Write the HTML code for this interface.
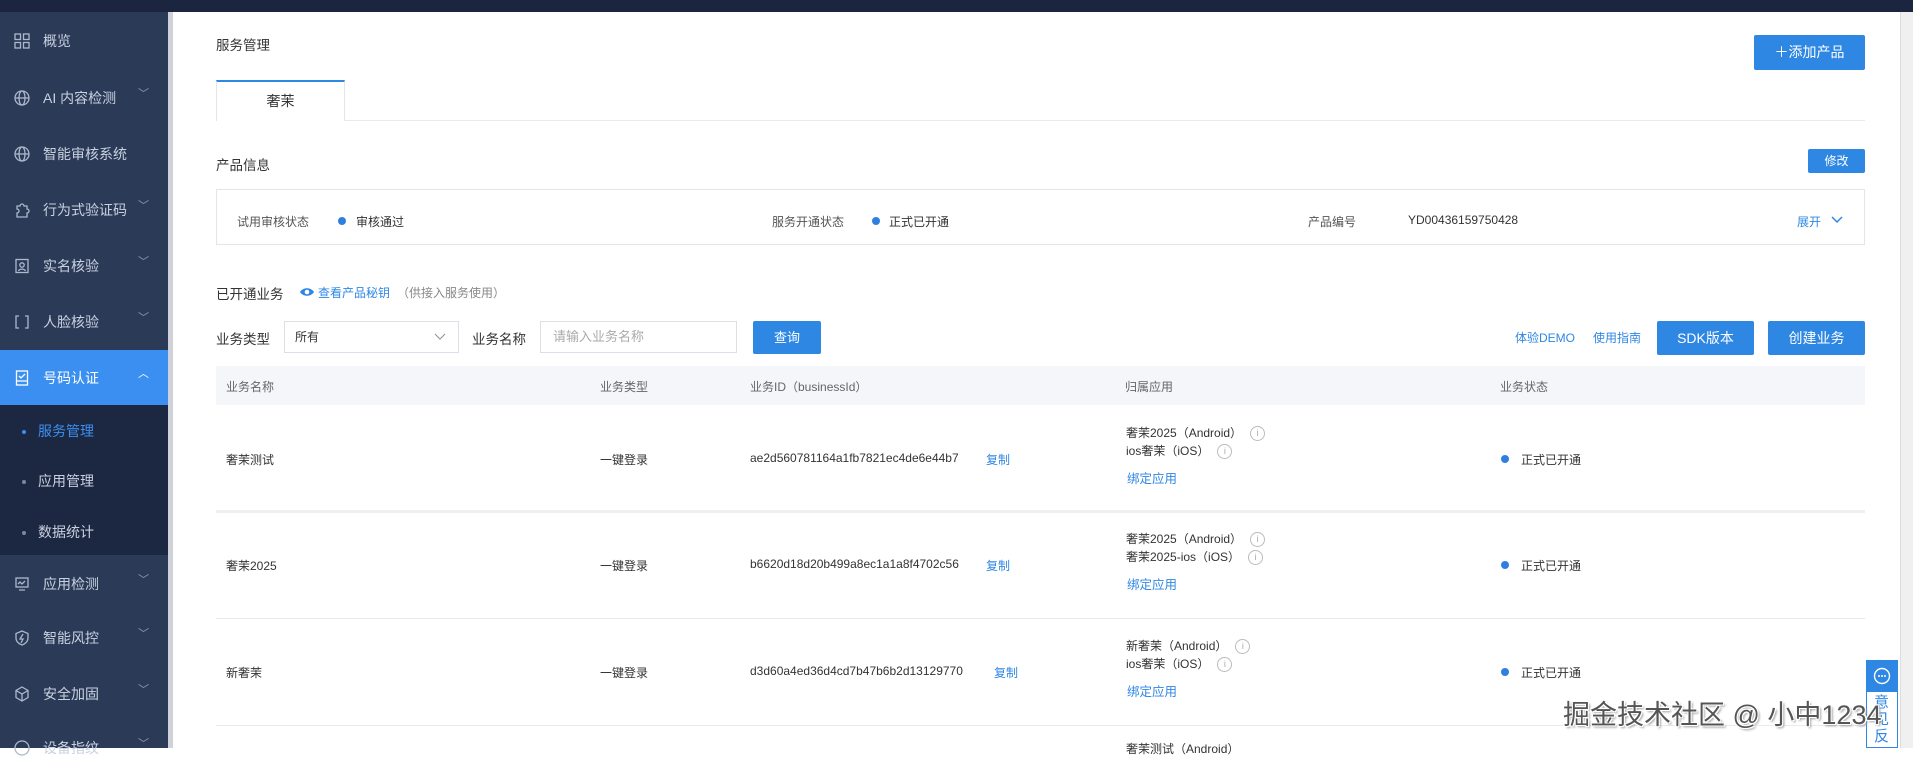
<!DOCTYPE html>
<html><head><meta charset="utf-8"><style>
*{margin:0;padding:0;box-sizing:border-box}
body{width:1913px;height:748px;overflow:hidden;background:#fff;font-family:"Liberation Sans","Noto Sans CJK SC",sans-serif;font-size:13px;color:#333;position:relative}
.a{position:absolute;white-space:nowrap}
.top{left:0;top:0;width:1913px;height:12px;background:#1b2540}
.side{left:0;top:12px;width:168px;height:736px;background:#2b3a57}
.strip{left:168px;top:12px;width:5px;height:736px;background:#cfd2d8}
.mi{left:0;width:168px;height:56px;color:#c9d1e0;font-size:14px;line-height:56px}
.mi .ic{position:absolute;left:14px;top:20px;width:16px;height:16px}
.mi .t{position:absolute;left:43px}
.mi .ar{position:absolute;left:138px;top:-4px;font-size:11px;color:#8f9bb3}
.sub{left:0;top:405px;width:168px;height:150px;background:#1c2741}
.si{left:22px;font-size:14px;color:#c9d1e0}
.si b{display:inline-block;width:4px;height:4px;border-radius:2px;background:#7b879e;margin-right:12px;vertical-align:middle}
.btn{background:#2f87e4;color:#fff;text-align:center;border-radius:2px}
.blue{color:#2f87e4}
.dot{display:inline-block;width:8px;height:8px;border-radius:4px;background:#2f7fe0}
.info{display:inline-block;width:15px;height:15px;border:1px solid #bbb;border-radius:8px;font-size:9px;line-height:13px;text-align:center;color:#aaa;margin-left:8px;vertical-align:middle}
.hl{left:216px;width:1649px;height:1px;background:#e8eaee}
</style></head><body>
<div class="a top"></div>
<div class="a side"></div>
<div class="a strip"></div>

<div class="a mi" style="top:13px"><svg class="ic" viewBox="0 0 16 16" fill="none" stroke="#aeb8cc" stroke-width="1.3"><rect x="1" y="1" width="5.5" height="5.5"/><rect x="9.5" y="1" width="5.5" height="5.5"/><rect x="1" y="9.5" width="5.5" height="5.5"/><rect x="9.5" y="9.5" width="5.5" height="5.5"/></svg><span class="t">概览</span></div>
<div class="a mi" style="top:70px"><svg class="ic" viewBox="0 0 16 16" fill="none" stroke="#aeb8cc" stroke-width="1.3"><circle cx="8" cy="8" r="7"/><ellipse cx="8" cy="8" rx="3" ry="7"/><path d="M1 8h14"/></svg><span class="t">AI 内容检测</span><span class="ar">﹀</span></div>
<div class="a mi" style="top:126px"><svg class="ic" viewBox="0 0 16 16" fill="none" stroke="#aeb8cc" stroke-width="1.3"><circle cx="8" cy="8" r="7"/><ellipse cx="8" cy="8" rx="3" ry="7"/><path d="M1 8h14"/></svg><span class="t">智能审核系统</span></div>
<div class="a mi" style="top:182px"><svg class="ic" viewBox="0 0 16 16" fill="none" stroke="#aeb8cc" stroke-width="1.3"><path d="M3 4h3a2 2 0 1 1 4 0h3v3a2 2 0 1 1 0 4v4H3v-4a2 2 0 1 0 0-4z"/></svg><span class="t">行为式验证码</span><span class="ar">﹀</span></div>
<div class="a mi" style="top:238px"><svg class="ic" viewBox="0 0 16 16" fill="none" stroke="#aeb8cc" stroke-width="1.3"><rect x="2" y="1.5" width="12" height="13"/><circle cx="8" cy="7" r="2.2"/><path d="M4.5 13c1-2.5 6-2.5 7 0"/></svg><span class="t">实名核验</span><span class="ar">﹀</span></div>
<div class="a mi" style="top:294px"><svg class="ic" viewBox="0 0 16 16" fill="none" stroke="#aeb8cc" stroke-width="1.3"><path d="M5 2H2v12h3M11 2h3v12h-3"/></svg><span class="t">人脸核验</span><span class="ar">﹀</span></div>
<div class="a mi" style="top:350px;height:55px;background:#3b8ff0;color:#fff"><svg class="ic" viewBox="0 0 16 16" fill="none" stroke="#fff" stroke-width="1.3"><rect x="2.5" y="1" width="11" height="14"/><path d="M5 6l2 2 4-4M2.5 11h11"/></svg><span class="t">号码认证</span><span class="ar" style="color:#fff">︿</span></div>
<div class="a sub"></div>
<div class="a si" style="top:421px;color:#3b8ff0"><b style="background:#3b8ff0"></b>服务管理</div>
<div class="a si" style="top:471px"><b></b>应用管理</div>
<div class="a si" style="top:522px"><b></b>数据统计</div>
<div class="a mi" style="top:556px"><svg class="ic" viewBox="0 0 16 16" fill="none" stroke="#aeb8cc" stroke-width="1.3"><rect x="2" y="2" width="12" height="9"/><path d="M4 8l2-2 2 2 3-3M5 14h6"/></svg><span class="t">应用检测</span><span class="ar">﹀</span></div>
<div class="a mi" style="top:610px"><svg class="ic" viewBox="0 0 16 16" fill="none" stroke="#aeb8cc" stroke-width="1.3"><path d="M8 1l6 2.5V8c0 3.5-3 6-6 7-3-1-6-3.5-6-7V3.5z"/><path d="M9 4L6 9h3l-2 4"/></svg><span class="t">智能风控</span><span class="ar">﹀</span></div>
<div class="a mi" style="top:666px"><svg class="ic" viewBox="0 0 16 16" fill="none" stroke="#aeb8cc" stroke-width="1.3"><path d="M8 1l6 3.5v7L8 15l-6-3.5v-7z"/><path d="M2 4.5l6 3.5 6-3.5M8 8v7"/></svg><span class="t">安全加固</span><span class="ar">﹀</span></div>
<div class="a mi" style="top:720px"><svg class="ic" viewBox="0 0 16 16" fill="none" stroke="#aeb8cc" stroke-width="1.3"><circle cx="8" cy="8" r="7"/></svg><span class="t">设备指纹</span><span class="ar">﹀</span></div>

<div class="a" style="left:1900px;top:12px;width:13px;height:736px;background:#f0f0f0;border-left:1px solid #ddd"></div>

<div class="a" style="left:216px;top:34px;font-size:13.5px;color:#333">服务管理</div>
<div class="a btn" style="left:1754px;top:35px;width:111px;height:35px;line-height:35px;font-size:14px">＋添加产品</div>

<div class="a" style="left:216px;top:80px;width:129px;height:41px;border:1px solid #e3e5ea;border-top:2px solid #2f87e4;border-bottom:none;background:#fff;text-align:center;line-height:38px;font-size:14px;z-index:2">奢茉</div>
<div class="a hl" style="top:120px"></div>

<div class="a" style="left:216px;top:154px;font-size:13.5px">产品信息</div>
<div class="a btn" style="left:1808px;top:149px;width:57px;height:24px;line-height:24px;font-size:12px">修改</div>

<div class="a" style="left:216px;top:189px;width:1649px;height:56px;border:1px solid #e3e5ea"></div>
<div class="a" style="left:237px;top:213px;font-size:12px;color:#555">试用审核状态</div>
<div class="a" style="left:338px;top:213px"><span class="dot"></span></div>
<div class="a" style="left:356px;top:213px;font-size:12px">审核通过</div>
<div class="a" style="left:772px;top:213px;font-size:12px;color:#555">服务开通状态</div>
<div class="a" style="left:872px;top:213px"><span class="dot"></span></div>
<div class="a" style="left:889px;top:213px;font-size:12px">正式已开通</div>
<div class="a" style="left:1308px;top:213px;font-size:12px;color:#555">产品编号</div>
<div class="a" style="left:1408px;top:213px;font-size:12px">YD00436159750428</div>
<div class="a blue" style="left:1797px;top:213px;font-size:12px">展开</div>
<svg class="a" style="left:1830px;top:215px" width="14" height="10" viewBox="0 0 14 10"><path d="M2 2l5 5 5-5" fill="none" stroke="#2f87e4" stroke-width="1.5"/></svg>

<div class="a" style="left:216px;top:283px;font-size:13.5px">已开通业务</div>
<svg class="a" style="left:299px;top:285px" width="16" height="14" viewBox="0 0 16 14"><path d="M1 7c3-5 11-5 14 0-3 5-11 5-14 0z" fill="#2f87e4"/><circle cx="8" cy="7" r="2.3" fill="#fff"/></svg>
<div class="a blue" style="left:318px;top:284px;font-size:12px">查看产品秘钥</div>
<div class="a" style="left:397px;top:284px;font-size:12px;color:#888">（供接入服务使用）</div>

<div class="a" style="left:216px;top:328px;font-size:13.5px">业务类型</div>
<div class="a" style="left:284px;top:321px;width:175px;height:32px;border:1px solid #dcdfe6;padding-left:10px;line-height:30px;font-size:12px">所有</div>
<svg class="a" style="left:434px;top:332px" width="12" height="10" viewBox="0 0 12 10"><path d="M1 2l5 5 5-5" fill="none" stroke="#999" stroke-width="1.2"/></svg>
<div class="a" style="left:472px;top:328px;font-size:13.5px">业务名称</div>
<div class="a" style="left:540px;top:321px;width:197px;height:32px;border:1px solid #dcdfe6;padding-left:12px;line-height:30px;font-size:13px;color:#aaa">请输入业务名称</div>
<div class="a btn" style="left:753px;top:321px;width:68px;height:33px;line-height:33px;font-size:13px">查询</div>
<div class="a blue" style="left:1515px;top:329px;font-size:12px">体验DEMO</div>
<div class="a blue" style="left:1593px;top:329px;font-size:12px">使用指南</div>
<div class="a btn" style="left:1657px;top:321px;width:97px;height:34px;line-height:34px;font-size:14px">SDK版本</div>
<div class="a btn" style="left:1768px;top:321px;width:97px;height:34px;line-height:34px;font-size:14px">创建业务</div>

<div class="a" style="left:216px;top:366px;width:1649px;height:39px;background:#f4f6fa"></div>
<div class="a" style="left:226px;top:378px;font-size:12px;color:#666">业务名称</div>
<div class="a" style="left:600px;top:378px;font-size:12px;color:#666">业务类型</div>
<div class="a" style="left:750px;top:378px;font-size:12px;color:#666">业务ID（businessId）</div>
<div class="a" style="left:1125px;top:378px;font-size:12px;color:#666">归属应用</div>
<div class="a" style="left:1500px;top:378px;font-size:12px;color:#666">业务状态</div>

<div class="a" style="left:216px;top:510px;width:1649px;height:3px;background:#eef0f3"></div>
<div class="a hl" style="top:618px"></div>
<div class="a hl" style="top:725px"></div>

<div class="a" style="left:226px;top:451px;font-size:12px">奢茉测试</div>
<div class="a" style="left:600px;top:451px;font-size:12px">一键登录</div>
<div class="a" style="left:750px;top:451px;font-size:12px">ae2d560781164a1fb7821ec4de6e44b7</div>
<div class="a blue" style="left:986px;top:451px;font-size:12px">复制</div>
<div class="a" style="left:1126px;top:424px;font-size:12px">奢茉2025（Android）<span class="info">i</span></div>
<div class="a" style="left:1126px;top:442px;font-size:12px">ios奢茉（iOS）<span class="info">i</span></div>
<div class="a blue" style="left:1127px;top:468px;font-size:12.5px">绑定应用</div>
<div class="a" style="left:1501px;top:451px"><span class="dot"></span></div>
<div class="a" style="left:1521px;top:451px;font-size:12px">正式已开通</div>

<div class="a" style="left:226px;top:557px;font-size:12px">奢茉2025</div>
<div class="a" style="left:600px;top:557px;font-size:12px">一键登录</div>
<div class="a" style="left:750px;top:557px;font-size:12px">b6620d18d20b499a8ec1a1a8f4702c56</div>
<div class="a blue" style="left:986px;top:557px;font-size:12px">复制</div>
<div class="a" style="left:1126px;top:530px;font-size:12px">奢茉2025（Android）<span class="info">i</span></div>
<div class="a" style="left:1126px;top:548px;font-size:12px">奢茉2025-ios（iOS）<span class="info">i</span></div>
<div class="a blue" style="left:1127px;top:574px;font-size:12.5px">绑定应用</div>
<div class="a" style="left:1501px;top:557px"><span class="dot"></span></div>
<div class="a" style="left:1521px;top:557px;font-size:12px">正式已开通</div>

<div class="a" style="left:226px;top:664px;font-size:12px">新奢茉</div>
<div class="a" style="left:600px;top:664px;font-size:12px">一键登录</div>
<div class="a" style="left:750px;top:664px;font-size:12px">d3d60a4ed36d4cd7b47b6b2d13129770</div>
<div class="a blue" style="left:994px;top:664px;font-size:12px">复制</div>
<div class="a" style="left:1126px;top:637px;font-size:12px">新奢茉（Android）<span class="info">i</span></div>
<div class="a" style="left:1126px;top:655px;font-size:12px">ios奢茉（iOS）<span class="info">i</span></div>
<div class="a blue" style="left:1127px;top:681px;font-size:12.5px">绑定应用</div>
<div class="a" style="left:1501px;top:664px"><span class="dot"></span></div>
<div class="a" style="left:1521px;top:664px;font-size:12px">正式已开通</div>
<div class="a" style="left:1126px;top:740px;font-size:12px;color:#333">奢茉测试（Android）</div>

<div class="a" style="left:1866px;top:660px;width:32px;height:88px;border:1px solid #2f87e4;background:#fff"></div>
<div class="a" style="left:1866px;top:660px;width:32px;height:32px;background:#2f87e4"></div>
<svg class="a" style="left:1872px;top:666px" width="20" height="20" viewBox="0 0 20 20"><circle cx="10" cy="10" r="7.5" fill="none" stroke="#fff" stroke-width="1.4"/><circle cx="7" cy="10" r="1" fill="#fff"/><circle cx="10" cy="10" r="1" fill="#fff"/><circle cx="13" cy="10" r="1" fill="#fff"/></svg>
<div class="a blue" style="left:1874px;top:694px;font-size:15px;line-height:17px;white-space:normal;width:16px">意见反</div>

<div class="a" style="left:1563px;top:693px;font-size:27px;color:#555;text-shadow:1px 1px 0 #fff,-1px -1px 0 #fff,1px -1px 0 #fff,-1px 1px 0 #fff,2px 2px 2px #999">掘金技术社区 @ 小中1234</div>
</body></html>
